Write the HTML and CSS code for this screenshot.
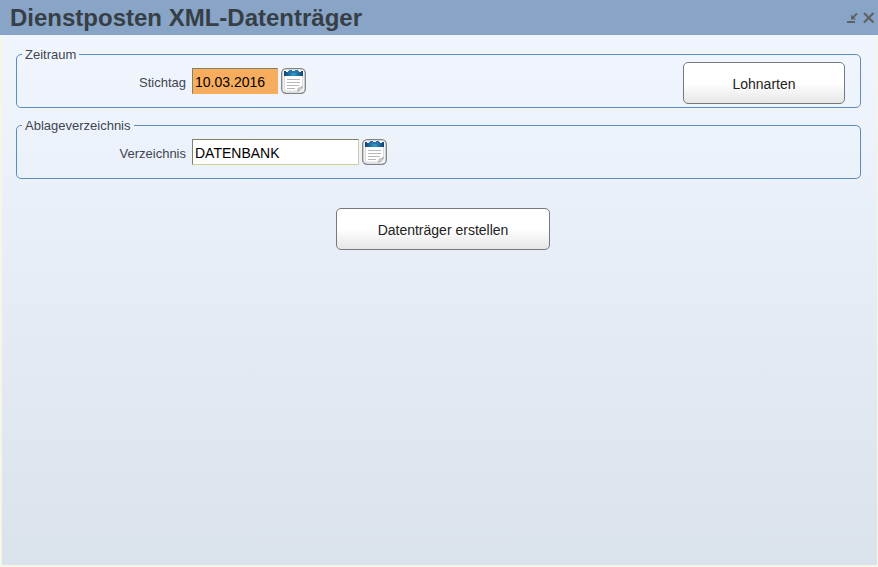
FILE: index.html
```
<!DOCTYPE html>
<html lang="de">
<head>
    <meta charset="UTF-8">
    <meta name="viewport" content="width=device-width, initial-scale=1.0">
    <title>Dienstposten XML-Datenträger</title>
    <link rel="stylesheet" href="styles.css">
</head>
<body>

    <!-- shared list icon -->
    <svg class="symbols" aria-hidden="true">
        <defs>
            <linearGradient id="clip" x1="0" x2="1" y1="0" y2="0">
                <stop offset="0" stop-color="#123f70"/>
                <stop offset="0.5" stop-color="#2f9ccb"/>
                <stop offset="1" stop-color="#123f70"/>
            </linearGradient>
        </defs>
        <symbol id="list-icon" viewBox="0 0 25 26">
            <rect x="0.700" y="0.700" width="23.600" height="24.600" rx="4.500" fill="#f4f4f4" stroke="#808285" stroke-width="1.300"/>
            <path d="M3.500 7h18v13l-3 3h-15z" fill="#fff" stroke="#d0d3d6" stroke-width="0.8"/>
            <path d="M3 3h19v5H3z" fill="url(#clip)"/>
            <path d="M8 2h9v3H8z" fill="#2c74a8"/>
            <path d="M5 2h2v2H5zM11 2h3v1h-3zM18 2h2v2h-2z" fill="#e9f1f7"/>
            <path d="M6 11.500h13M6 14.500h13M6 17.500h12M6 20.500h8" stroke="#b8b8b8" stroke-width="1"/>
            <path d="M16 23c1-1 1-2 1-3 1 0 3 0 4-2v2l-3 3z" fill="#d2d4d6" stroke="#999" stroke-width="0.600"/>
        </symbol>
    </svg>

    <div class="window">
        <header class="titlebar">
            <h1>Dienstposten XML-Datenträger</h1>
            <div class="window-buttons">
                <button type="button" aria-label="Minimieren">
                    <svg width="12" height="12" viewBox="0 0 12 12" fill="none" stroke="#5f6263">
                        <path d="M0 10h8" stroke-width="2"/>
                        <path d="M10 1.500L6 5.500" stroke-width="1.800"/>
                        <path d="M4 2.500v5h5z" fill="#5f6263" stroke="none"/>
                    </svg>
                </button>
                <button type="button" aria-label="Schließen">
                    <svg width="12" height="12" viewBox="0 0 12 12" fill="none" stroke="#5f6263">
                        <path d="M1 1l9.500 9.500M10.500 1L1 10.500" stroke-width="2.200"/>
                    </svg>
                </button>
            </div>
        </header>

        <form class="content">
            <fieldset>
                <legend>Zeitraum</legend>
                <div class="row">
                    <div class="field">
                        <label for="stichtag">Stichtag</label>
                        <input type="text" id="stichtag" class="date" value="10.03.2016">
                        <button type="button" class="icon-btn" aria-label="Stichtag auswählen">
                            <svg width="25" height="26"><use href="#list-icon"/></svg>
                        </button>
                    </div>
                    <button type="button" class="btn">Lohnarten</button>
                </div>
            </fieldset>

            <fieldset>
                <legend>Ablageverzeichnis</legend>
                <div class="row">
                    <div class="field">
                        <label for="verzeichnis">Verzeichnis</label>
                        <input type="text" id="verzeichnis" value="DATENBANK">
                        <button type="button" class="icon-btn" aria-label="Verzeichnis auswählen">
                            <svg width="25" height="26"><use href="#list-icon"/></svg>
                        </button>
                    </div>
                </div>
            </fieldset>

            <div class="actions">
                <button type="button" class="btn wide">Datenträger erstellen</button>
            </div>
        </form>
    </div>

</body>
</html>
```
FILE: styles.css
```
* {
    margin: 0;
    padding: 0;
    box-sizing: border-box;
}

body {
    font-family: "Liberation Sans", Arial, sans-serif;
    font-size: 13px;
    color: #3f4550;
    background-color: #f6f6e6;
}

.symbols {
    position: absolute;
    width: 0;
    height: 0;
}

.window {
    display: flex;
    flex-direction: column;
    min-height: 100vh;
}

.titlebar {
    display: flex;
    justify-content: space-between;
    align-items: flex-start;
    height: 35px;
    padding: 0 3px 0 10px;
    background-color: #88a4c6;
}

.titlebar h1 {
    font-size: 24px;
    line-height: 36px;
    color: #373f46;
}

.window-buttons {
    display: flex;
    gap: 4px;
    padding-top: 12px;
}

.window-buttons button {
    width: 12px;
    height: 12px;
    border: none;
    background: none;
}

.window-buttons svg,
.icon-btn svg {
    display: block;
}

.content {
    flex: 1;
    display: flex;
    flex-direction: column;
    gap: 10px;
    margin: 0 1px 2px 2px;
    padding: 12px 16px 12px 14px;
    background: linear-gradient(#f1f6fe, #dae2ec);
}

fieldset {
    min-width: 0;
    height: 61px;
    padding: 0 15px 0 5px;
    border: 1px solid #5c8cc0;
    border-radius: 5px;
}

legend {
    padding: 1px 3px 0;
    line-height: 14px;
}

.row {
    display: flex;
    justify-content: space-between;
    align-items: flex-start;
}

.field {
    display: flex;
    align-items: center;
    padding-top: 6px;
}

.field label {
    width: 164px;
    margin-right: 6px;
    padding-top: 2px;
    text-align: right;
}

.field input {
    width: 167px;
    height: 26px;
    padding: 2px 2px 0;
    border: 1px solid #cdd09a;
    border-top-color: #7d8468;
    border-left-color: #7d8468;
    background-color: #fff;
    font-family: inherit;
    font-size: 14px;
    color: #000;
    outline: none;
}

.field input.date {
    width: 86px;
    border-right-color: #f8ad5e;
    border-bottom-color: #f8ad5e;
    background-color: #f8ad5e;
}

.icon-btn {
    width: 25px;
    height: 26px;
    margin-left: 3px;
    border: none;
    background: none;
    cursor: pointer;
}

.btn {
    width: 162px;
    height: 42px;
    padding-top: 2px;
    border: 1px solid #77797c;
    border-radius: 5px;
    background: linear-gradient(#fff 50%, #e6e6e6);
    font-family: inherit;
    font-size: 14px;
    color: #222;
    cursor: pointer;
}

.btn.wide {
    width: 214px;
}

.actions {
    display: flex;
    justify-content: center;
    padding: 19px 0 0 9px;
}
```
